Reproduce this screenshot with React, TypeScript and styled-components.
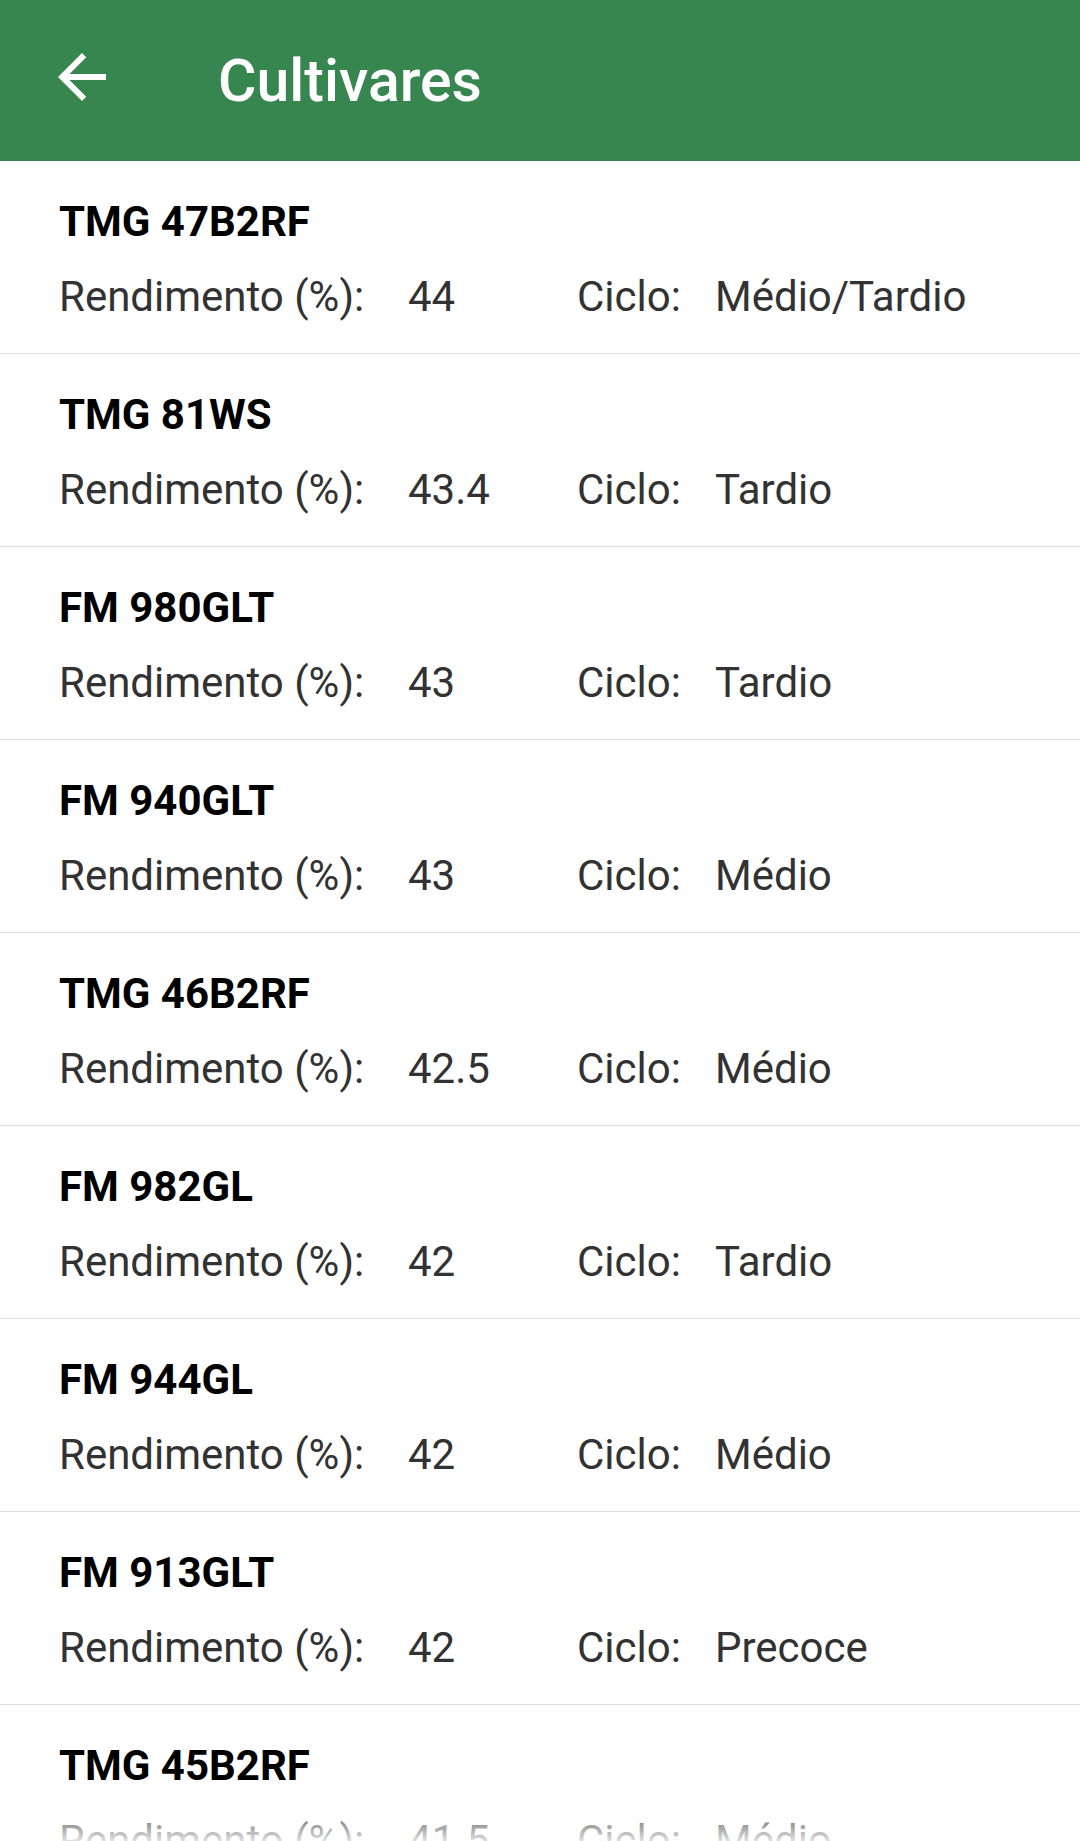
import { createGlobalStyle, styled } from "styled-components";

const GlobalStyle = createGlobalStyle`
  html, body {
    margin: 0;
    padding: 0;
    background: #ffffff;
    font-family: Roboto, "Noto Sans", "Liberation Sans", sans-serif;
  }
`;

const Screen = styled.div`
  position: relative;
  width: 1080px;
  height: 1841px;
  overflow: hidden;
  background: #ffffff;
`;

const Toolbar = styled.header`
  display: flex;
  align-items: center;
  height: 161px;
  padding-left: 46px;
  background-color: #37854f;
  box-sizing: border-box;
`;

const BackButton = styled.button`
  display: flex;
  align-items: center;
  justify-content: center;
  width: 72px;
  height: 72px;
  padding: 0;
  margin: 0 0 8px 0;
  border: none;
  background: transparent;
  color: #ffffff;
`;

const Title = styled.h1`
  margin: 0 0 0 100px;
  font-size: 59px;
  font-weight: 500;
  color: #ffffff;
`;

const List = styled.ul`
  list-style: none;
  margin: 0;
  padding: 0;
`;

const Item = styled.li`
  height: 193px;
  padding: 36px 0 0 59px;
  box-sizing: border-box;
  border-bottom: 1px solid #dedede;
`;

const Name = styled.div`
  font-size: 42px;
  line-height: 50px;
  font-weight: 700;
  color: #000000;
`;

const Details = styled.div`
  display: grid;
  grid-template-columns: 349px 169px 138px auto;
  margin-top: 25px;
  font-size: 42px;
  line-height: 50px;
  color: #323232;
`;

const Fade = styled.div`
  position: absolute;
  left: 0;
  right: 0;
  bottom: 0;
  height: 40px;
  background: linear-gradient(to bottom, rgba(255, 255, 255, 0), rgba(255, 255, 255, 0.85));
  pointer-events: none;
`;

interface ICultivar {
  name: string;
  yieldPct: string;
  cycle: string;
}

const cultivars: ICultivar[] = [
  { name: "TMG 47B2RF", yieldPct: "44", cycle: "Médio/Tardio" },
  { name: "TMG 81WS", yieldPct: "43.4", cycle: "Tardio" },
  { name: "FM 980GLT", yieldPct: "43", cycle: "Tardio" },
  { name: "FM 940GLT", yieldPct: "43", cycle: "Médio" },
  { name: "TMG 46B2RF", yieldPct: "42.5", cycle: "Médio" },
  { name: "FM 982GL", yieldPct: "42", cycle: "Tardio" },
  { name: "FM 944GL", yieldPct: "42", cycle: "Médio" },
  { name: "FM 913GLT", yieldPct: "42", cycle: "Precoce" },
  { name: "TMG 45B2RF", yieldPct: "41.5", cycle: "Médio" },
];

function BackArrow() {
  return (
    <svg width="72" height="72" viewBox="0 0 24 24" fill="currentColor">
      <path d="M20 11H7.83l5.59-5.59L12 4l-8 8 8 8 1.41-1.41L7.83 13H20v-2z" />
    </svg>
  );
}

function App() {
  return (
    <>
      <GlobalStyle />
      <Screen>
        <Toolbar>
          <BackButton aria-label="Voltar">
            <BackArrow />
          </BackButton>
          <Title>Cultivares</Title>
        </Toolbar>
        <List>
          {cultivars.map((c) => (
            <Item key={c.name}>
              <Name>{c.name}</Name>
              <Details>
                <span>Rendimento (%):</span>
                <span>{c.yieldPct}</span>
                <span>Ciclo:</span>
                <span>{c.cycle}</span>
              </Details>
            </Item>
          ))}
        </List>
        <Fade />
      </Screen>
    </>
  );
}

export default App;
